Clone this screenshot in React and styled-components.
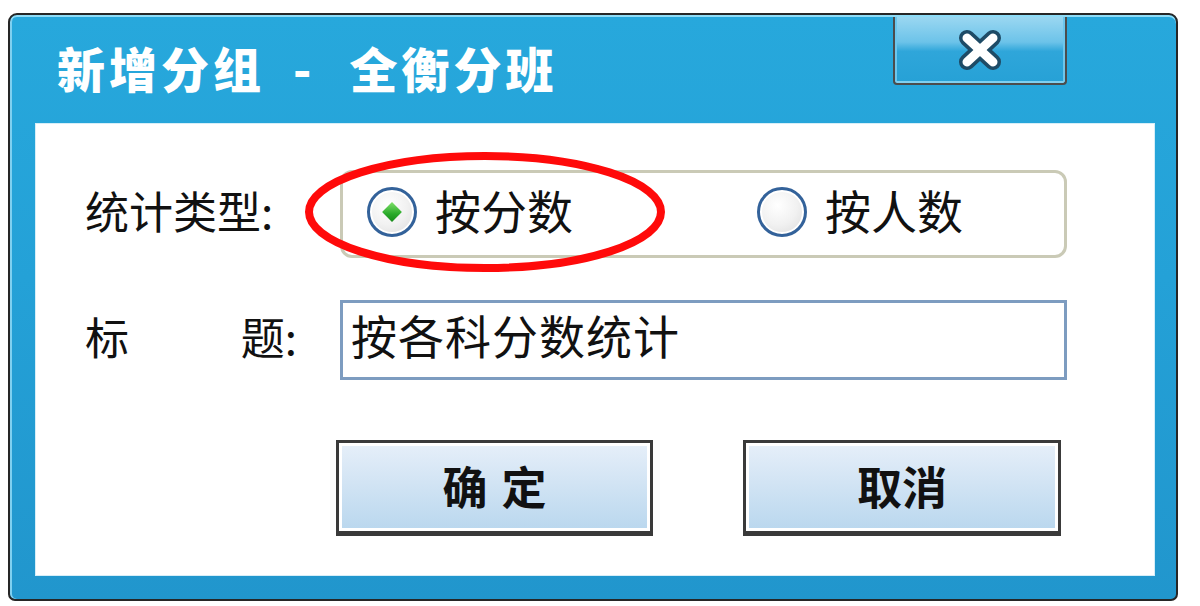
import React from "react";
import styled, { createGlobalStyle } from "styled-components";

const Global = createGlobalStyle`
  html, body { margin: 0; padding: 0; background: #ffffff; }
  body { font-family: "Noto Sans CJK SC", "Noto Sans", sans-serif; }
  * { box-sizing: border-box; }
`;

const Page = styled.div`
  width: 1200px;
  height: 606px;
  padding: 13px 0 0 8px;
  overflow: hidden;
`;

const Dialog = styled.div`
  width: 1170px;
  height: 588px;
  border: 2px solid #262626;
  border-radius: 9px 9px 7px 7px;
  background: linear-gradient(180deg, #27a8dc 0%, #24a1d7 45%, #2196cd 100%);
  box-shadow: inset 0 2px 0 #8fdcf7, inset 2px 0 0 #7fd0f0;
  display: flex;
  flex-direction: column;
`;

const TitleBar = styled.div`
  height: 108px;
  display: flex;
  justify-content: space-between;
  align-items: flex-start;
  padding-left: 47px;
`;

const Title = styled.div`
  align-self: center;
  margin-bottom: 4px;
  color: #ffffff;
  font-size: 48px;
  font-weight: 900;
  letter-spacing: 4px;
  white-space: pre;
  line-height: 1;
`;

const Sep = styled.span`
  margin: 0 34px 0 28px;
`;

const CloseButton = styled.div`
  margin-top: 2px;
  margin-right: 109px;
  width: 174px;
  height: 68px;
  border: 2px solid #4c4c4c;
  border-top-width: 0;
  border-radius: 0 0 4px 4px;
  background: linear-gradient(180deg, #9ad7f1 0%, #6cc3e9 38%, #2fa6da 52%, #26a1d6 100%);
  box-shadow: inset 0 -2px 0 #7fd0f0, inset 2px 0 0 #6cc6ec, inset -2px 0 0 #6cc6ec;
  display: flex;
  align-items: center;
  justify-content: center;
`;

const Content = styled.div`
  flex: 1;
  margin: 0 21px 23px 25px;
  background: #ffffff;
  border: 1px solid #d6eef8;
  position: relative;
  padding: 46px 0 0 49px;
  display: grid;
  grid-template-columns: 255px 727px;
  grid-auto-rows: auto;
  align-content: start;
  row-gap: 42px;
  align-items: center;
`;

const Label = styled.div`
  width: 212px;
  display: flex;
  justify-content: space-between;
  font-size: 44px;
  color: #111;
  line-height: 1;
  padding-bottom: 8px;
`;

const GroupBox = styled.div`
  position: relative;
  height: 88px;
  border: 3px solid #cacab6;
  border-radius: 12px;
  display: flex;
  align-items: center;
  padding-left: 24px;
`;

const RadioItem = styled.label`
  display: flex;
  align-items: center;
  gap: 18px;
  width: ${(p) => p.$width}px;
  font-size: 46px;
  color: #111;
  line-height: 1;
  padding-bottom: 4px;
`;

const RadioText = styled.span`
  padding-bottom: 6px;
`;

const RadioCircle = styled.span`
  flex: none;
  width: 50px;
  height: 50px;
  border-radius: 50%;
  border: 3px solid #33629a;
  background: radial-gradient(circle at 40% 35%, #ffffff 0%, #f1f1f1 50%, #d9d9d9 100%);
  box-shadow: inset 0 0 0 2px #ffffff;
  display: flex;
  align-items: center;
  justify-content: center;
`;

const Dot = styled.span`
  width: 14px;
  height: 14px;
  transform: rotate(45deg);
  background: linear-gradient(135deg, #7fe06a 0%, #2aaa2a 60%, #178a1a 100%);
`;

const Annotation = styled.svg`
  position: absolute;
  left: -40px;
  top: -23px;
  pointer-events: none;
`;

const TextField = styled.div`
  height: 80px;
  border: 3px solid #7d9cc0;
  padding: 0 0 12px 8px;
  display: flex;
  align-items: center;
  font-size: 46px;
  color: #111;
  line-height: 1;
  letter-spacing: 1px;
`;

const ButtonRow = styled.div`
  grid-column: 2;
  display: flex;
  gap: 90px;
  margin-left: -4px;
  margin-top: 18px;
`;

const Button = styled.div`
  width: ${(p) => p.$width}px;
  height: 96px;
  border: 3px solid #3a3a3a;
  border-bottom-width: 5px;
  background: linear-gradient(180deg, #e6eff9 0%, #d2e4f4 45%, #b9d7ee 100%);
  box-shadow: inset 0 0 0 3px #ffffff;
  display: flex;
  align-items: center;
  justify-content: center;
  gap: ${(p) => p.$gap || 0}px;
  padding-bottom: 4px;
  font-size: 45px;
  font-weight: 700;
  color: #111;
  line-height: 1;
`;

function CloseIcon() {
  return (
    <svg width="50" height="42" viewBox="0 0 50 42">
      <g strokeLinecap="round">
        <line x1="12" y1="9" x2="38" y2="33" stroke="#1e4b66" strokeWidth="16" />
        <line x1="38" y1="9" x2="12" y2="33" stroke="#1e4b66" strokeWidth="16" />
        <line x1="12" y1="9" x2="38" y2="33" stroke="#ffffff" strokeWidth="9" />
        <line x1="38" y1="9" x2="12" y2="33" stroke="#ffffff" strokeWidth="9" />
      </g>
    </svg>
  );
}

export default function App() {
  return (
    <>
      <Global />
      <Page>
        <Dialog>
          <TitleBar>
            <Title>
              新增分组<Sep>-</Sep>全衡分班
            </Title>
            <CloseButton>
              <CloseIcon />
            </CloseButton>
          </TitleBar>
          <Content>
            <Label>统计类型:</Label>
            <GroupBox>
              <RadioItem $width={390}>
                <RadioCircle>
                  <Dot />
                </RadioCircle>
                <RadioText>按分数</RadioText>
              </RadioItem>
              <RadioItem $width={260}>
                <RadioCircle />
                <RadioText>按人数</RadioText>
              </RadioItem>
              <Annotation width="364" height="124" viewBox="0 0 364 124">
                <ellipse cx="182" cy="62" rx="176" ry="56" fill="none" stroke="#ff0a0a" strokeWidth="8" />
              </Annotation>
            </GroupBox>
            <Label>
              <span>标</span>
              <span>题:</span>
            </Label>
            <TextField>按各科分数统计</TextField>
            <ButtonRow>
              <Button $width={317} $gap={14}>
                <span>确</span>
                <span>定</span>
              </Button>
              <Button $width={318}>取消</Button>
            </ButtonRow>
          </Content>
        </Dialog>
      </Page>
    </>
  );
}
